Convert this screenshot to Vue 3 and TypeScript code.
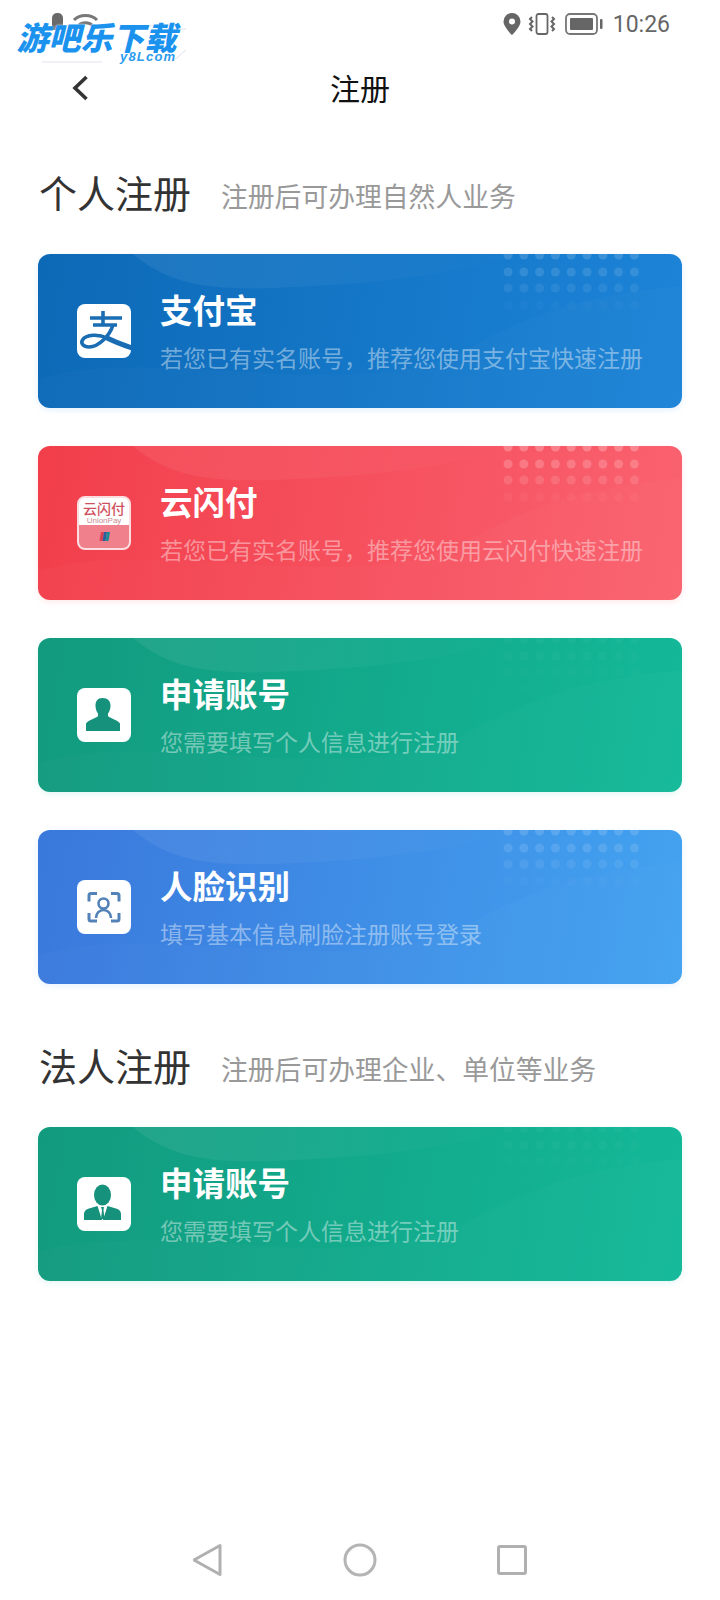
<template>
  <div class="page">
    <div class="status-bar">
      <svg class="st-left" width="52" height="20" viewBox="0 0 52 20">
        <path d="M2 18V6a5 5 0 0 1 5-5h1a5 5 0 0 1 5 5v12z" fill="#6a6a6a" />
        <path d="M24 8c6-6 17-6 23 0M29 13c3-3 10-3 13 0" fill="none" stroke="#777" stroke-width="3" />
      </svg>
      <span class="st-right">
        <svg width="18" height="22" viewBox="0 0 18 22">
          <path d="M9 0a8.500 8.500 0 0 0-8.500 8.500C.5 14 9 22 9 22s8.500-8 8.500-13.500A8.500 8.500 0 0 0 9 0zm0 11.500a3 3 0 1 1 0-6 3 3 0 0 1 0 6z" fill="#666" />
        </svg>
        <svg class="st-vib" width="28" height="22" viewBox="0 0 28 22">
          <rect x="8.500" y="1" width="11" height="20" rx="2" fill="none" stroke="#666" stroke-width="1.800" />
          <path d="M4 4l-2 2 2.500 2.500L2 11l2.500 2.500L2 16l2 2M24 4l2 2-2.500 2.500L26 11l-2.500 2.500L26 16l-2 2" fill="none" stroke="#666" stroke-width="2" />
        </svg>
        <svg class="st-bat" width="38" height="22" viewBox="0 0 38 22">
          <rect x="1" y="1" width="31" height="20" rx="4" fill="none" stroke="#777" stroke-width="1.800" />
          <rect x="5" y="5" width="23" height="12" rx="1" fill="#666" />
          <rect x="35" y="6" width="2.500" height="10" rx="1" fill="#666" />
        </svg>
        <span class="st-time">10:26</span>
      </span>
    </div>

    <header class="nav-bar">
      <svg class="back" width="18" height="26" viewBox="0 0 18 26">
        <path d="M15.500 2L4 13l11.500 11" fill="none" stroke="#333" stroke-width="3.600" />
      </svg>
      <span class="nav-title">注册</span>
    </header>

    <main class="content">
      <section v-for="sec in sections" :key="sec.title" class="section">
        <div class="sec-head">
          <h2 class="sec-title">{{ sec.title }}</h2>
          <span class="sec-sub">{{ sec.sub }}</span>
        </div>
        <div class="cards">
          <div v-for="c in sec.cards" :key="c.sub + c.kind" class="card" :class="'card-' + c.tone">
            <svg class="card-bg" width="644" height="154" viewBox="0 0 644 154">
              <defs>
                <linearGradient id="blob-fade" x1="0" y1="0" x2="1" y2="0">
                  <stop offset="0" stop-color="#fff" stop-opacity="0.07" />
                  <stop offset="0.5" stop-color="#fff" stop-opacity="0.04" />
                  <stop offset="1" stop-color="#fff" stop-opacity="0" />
                </linearGradient>
              </defs>
              <path d="M95 0C130 30 170 36 235 34C320 30 400 25 480 0z" fill="url(#blob-fade)" />
              <path d="M0 125C120 90 300 150 420 100C490 60 550 40 644 32V154H0z" fill="#fff" opacity="0.018" />
              <g v-for="(row, r) in dotRows" :key="r" :opacity="c.dots * row.o">
                <circle v-for="n in 9" :key="n" :cx="470 + (n - 1) * 15.800" :cy="row.y" r="4.500" fill="#fff" />
              </g>
            </svg>

            <div class="icon-box" :class="{ union: c.kind === 'union' }">
              <svg v-if="c.kind === 'alipay'" width="54" height="54" viewBox="0 0 54 54">
                <path d="M26 7v14M13 14h32M16 21h24" fill="none" stroke="#1a6db3" stroke-width="3.600" />
                <path d="M36 21C33 31 22 43 12 43C6 43 3.500 39 5.500 36C9 30 22 30 30 34" fill="none" stroke="#1a6db3" stroke-width="3.600" />
                <path d="M29 33.500C38 38 46 41 55 44" fill="none" stroke="#1a6db3" stroke-width="5" />
              </svg>
              <template v-else-if="c.kind === 'union'">
                <div class="u-top">
                  <span class="u-cn">云闪付</span>
                  <span class="u-en">UnionPay</span>
                </div>
                <div class="u-bottom">
                  <svg width="11" height="11" viewBox="0 0 11 11">
                    <path d="M2 1h3L3.500 10H.500z" fill="#d8404f" />
                    <path d="M5 1h3L6.500 10h-3z" fill="#2c5f9e" />
                    <path d="M8 1h3L9.500 10h-3z" fill="#1c8c96" />
                  </svg>
                </div>
              </template>
              <svg v-else-if="c.kind === 'person'" width="54" height="54" viewBox="0 0 54 54">
                <path d="M25.500 10c-5 0-7 3.500-7 7.500c0 3.500 1 6 2.500 8v2.500c0 1.500-10 4-12 7.500V43h34v-7.500c-2-3.500-12-6-12-7.500V25.500c1.500-2 2.500-4.500 2.500-8c0-4-2.500-7.500-8-7.500z" fill="#15917c" />
              </svg>
              <svg v-else-if="c.kind === 'face'" width="54" height="54" viewBox="0 0 54 54">
                <path d="M20 13.500h-6a2 2 0 0 0-2 2v6M34 13.500h6a2 2 0 0 1 2 2v6M20 41h-6a2 2 0 0 1-2-2v-6M34 41h6a2 2 0 0 0 2-2v-6" fill="none" stroke="#5382b8" stroke-width="3" />
                <circle cx="26.500" cy="23.500" r="5" fill="none" stroke="#5382b8" stroke-width="2.600" />
                <path d="M19 38c0-5 3.500-8 7.500-8s7.500 3 7.500 8" fill="none" stroke="#5382b8" stroke-width="2.600" />
              </svg>
              <svg v-else width="54" height="54" viewBox="0 0 54 54">
                <ellipse cx="25.500" cy="18" rx="8.500" ry="10.500" fill="#15917c" />
                <path d="M7 43v-6c0-3 2-4.500 5-5.500l8.500-2.500L25 43zM44 43v-6c0-3-2-4.500-5-5.500L30.500 29 26 43z" fill="#15917c" />
                <path d="M24 30h3l-.5 3 1 9h-3.500l1-9z" fill="#15917c" />
              </svg>
            </div>

            <div class="card-text">
              <div class="card-title">{{ c.title }}</div>
              <div class="card-sub">{{ c.sub }}</div>
            </div>
          </div>
        </div>
      </section>
    </main>

    <footer class="sys-nav">
      <svg width="30" height="34" viewBox="0 0 30 34">
        <path d="M27 2.500v29L1 17z" fill="none" stroke="#b0b0b0" stroke-width="3" stroke-linejoin="round" />
      </svg>
      <svg width="34" height="34" viewBox="0 0 34 34">
        <circle cx="17" cy="17" r="15" fill="none" stroke="#b4b4b4" stroke-width="3" />
      </svg>
      <svg width="30" height="30" viewBox="0 0 30 30">
        <rect x="1.500" y="1.500" width="27" height="27" rx="1.500" fill="none" stroke="#b0b0b0" stroke-width="3" />
      </svg>
    </footer>

    <!-- watermark sitting over the status bar -->
    <div class="watermark">
      <svg class="wm-lines" width="180" height="56" viewBox="0 0 180 56">
        <path d="M14 24h40M20 30h24M120 14h36M150 17h22M172 38l-14 12M28 50h60" fill="none" stroke="#dfe2ee" stroke-width="1" />
      </svg>
      <span class="wm-cn">游吧乐下载</span>
      <span class="wm-en">y8Lcom</span>
    </div>
  </div>
</template>

<script setup lang="ts">
type Kind = 'alipay' | 'union' | 'person' | 'face' | 'suit'

interface Card {
  title: string
  sub: string
  tone: string
  kind: Kind
  dots: number
}

const dotRows = [
  { y: 1, o: 1 },
  { y: 18, o: 0.8 },
  { y: 34, o: 0.5 },
  { y: 51, o: 0.15 }
]

const sections: { title: string; sub: string; cards: Card[] }[] = [
  {
    title: '个人注册',
    sub: '注册后可办理自然人业务',
    cards: [
      { title: '支付宝', sub: '若您已有实名账号，推荐您使用支付宝快速注册', tone: 'blue', kind: 'alipay', dots: 0.14 },
      { title: '云闪付', sub: '若您已有实名账号，推荐您使用云闪付快速注册', tone: 'red', kind: 'union', dots: 0.24 },
      { title: '申请账号', sub: '您需要填写个人信息进行注册', tone: 'green', kind: 'person', dots: 0.03 },
      { title: '人脸识别', sub: '填写基本信息刷脸注册账号登录', tone: 'sky', kind: 'face', dots: 0.14 }
    ]
  },
  {
    title: '法人注册',
    sub: '注册后可办理企业、单位等业务',
    cards: [{ title: '申请账号', sub: '您需要填写个人信息进行注册', tone: 'green', kind: 'suit', dots: 0.03 }]
  }
]
</script>

<style>
html,
body {
  margin: 0;
  background: #fff;
}
</style>

<style scoped>
.page {
  position: relative;
  width: 720px;
  height: 1600px;
  display: flex;
  flex-direction: column;
  background: #fff;
  overflow: hidden;
  font-family: 'Noto Sans CJK SC', 'Liberation Sans', sans-serif;
}
.status-bar {
  height: 50px;
  display: flex;
  align-items: center;
  justify-content: space-between;
  padding: 0 50px 2px 50px;
  box-sizing: border-box;
}
.st-left {
  margin-top: -4px;
}
.st-right {
  display: flex;
  align-items: center;
}
.st-vib {
  margin-left: 7px;
}
.st-bat {
  margin-left: 9px;
}
.st-time {
  margin-left: 10px;
  font-family: Roboto, 'Liberation Sans', sans-serif;
  font-size: 23px;
  color: #666;
}
.nav-bar {
  height: 80px;
  display: flex;
  align-items: center;
  justify-content: center;
  position: relative;
}
.back {
  position: absolute;
  left: 71px;
  top: 25px;
}
.nav-title {
  font-size: 30px;
  color: #111;
  margin-bottom: 6px;
}
.content {
  flex: 1;
  padding-top: 38px;
}
.section + .section {
  margin-top: 57px;
}
.sec-head {
  height: 52px;
  margin-bottom: 34px;
  padding-left: 39px;
  display: flex;
  align-items: center;
}
.sec-title {
  margin: 0 0 5px;
  font-size: 38px;
  font-weight: 400;
  color: #333;
  line-height: 52px;
}
.sec-sub {
  margin-left: 30px;
  margin-top: 3px;
  font-size: 26.800px;
  color: #999;
}
.cards {
  display: flex;
  flex-direction: column;
  gap: 38px;
  padding: 0 38px;
}
.card {
  position: relative;
  height: 154px;
  border-radius: 12px;
  overflow: hidden;
  display: flex;
  align-items: center;
  padding-left: 39px;
}
.card-blue {
  background: linear-gradient(100deg, #0c69b6, #1d84d8);
  box-shadow: 0 2px 6px rgba(31, 135, 219, 0.12);
}
.card-red {
  background: linear-gradient(100deg, #f23e4b, #fa6270);
  box-shadow: 0 2px 6px rgba(242, 62, 75, 0.12);
}
.card-green {
  background: linear-gradient(100deg, #129a7e, #13b999);
  box-shadow: 0 2px 6px rgba(20, 188, 157, 0.12);
}
.card-sky {
  background: linear-gradient(100deg, #3a78dc, #43a3f0);
  box-shadow: 0 2px 6px rgba(69, 166, 242, 0.12);
}
.card-bg {
  position: absolute;
  left: 0;
  top: 0;
}
.icon-box {
  position: relative;
  width: 54px;
  height: 54px;
  flex: none;
  border-radius: 8px;
  background: #fff;
  overflow: hidden;
}
.icon-box svg {
  display: block;
}
.icon-box.union {
  box-sizing: border-box;
  border: 2px solid #fbdde0;
  display: flex;
  flex-direction: column;
}
.u-top {
  height: 27px;
  display: flex;
  flex-direction: column;
  align-items: center;
  flex: none;
}
.u-cn {
  font-size: 14px;
  line-height: 16px;
  margin-top: 2px;
  color: #d0505e;
  font-weight: 500;
  white-space: nowrap;
}
.u-en {
  font-family: 'Liberation Sans', sans-serif;
  font-size: 8px;
  line-height: 9px;
  color: #c98a90;
}
.u-bottom {
  flex: 1;
  background: #f0808c;
  display: flex;
  align-items: center;
  justify-content: center;
}
.card-text {
  position: relative;
  margin-left: 29px;
  display: flex;
  flex-direction: column;
  gap: 12px;
}
.card-title {
  font-size: 32.500px;
  line-height: 40px;
  font-weight: 700;
  color: #fff;
}
.card-sub {
  font-size: 23px;
  line-height: 32px;
  color: rgba(255, 255, 255, 0.42);
  white-space: nowrap;
}
.sys-nav {
  height: 80px;
  display: flex;
  justify-content: center;
  align-items: center;
  gap: 120px;
}
.watermark {
  position: absolute;
  left: 20px;
  top: 14px;
  width: 170px;
  height: 52px;
}
.wm-lines {
  position: absolute;
  left: -6px;
  top: -2px;
}
.wm-cn {
  position: absolute;
  left: 0;
  top: 0;
  font-size: 32px;
  line-height: 44px;
  font-weight: 900;
  color: #1b93ee;
  white-space: nowrap;
  transform: skewX(-14deg);
  text-shadow: 0 0 2px #fff;
}
.wm-en {
  position: absolute;
  left: 100px;
  top: 36px;
  font-family: 'Liberation Sans', sans-serif;
  font-size: 13px;
  line-height: 14px;
  font-weight: 700;
  font-style: italic;
  letter-spacing: 1.200px;
  color: #2b9bee;
}
</style>
